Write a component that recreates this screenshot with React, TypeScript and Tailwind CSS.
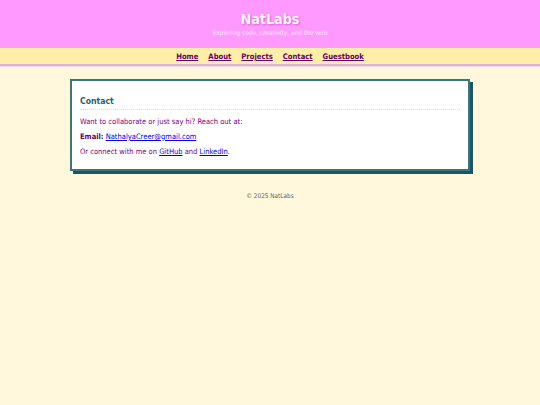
export default function App() {
  const links = ['Home', 'About', 'Projects', 'Contact', 'Guestbook'];
  return (
    <div className="min-h-[405px] bg-[#fff8dc] font-['DejaVu_Sans_Condensed','DejaVu_Sans',sans-serif] [font-stretch:condensed]">
      <header className="h-[48px] bg-[#ff99ff] pt-[11px] text-center shadow-[0_1px_1px_rgba(220,110,220,0.6)]">
        <h1 className="text-[14.2px] font-bold leading-[16px] text-[#fff0f8] [text-shadow:1px_1px_2px_rgba(170,60,170,0.55)]">NatLabs</h1>
        <p className="mt-[2px] text-[6.5px] leading-[8px] text-[#ffe4ff]">Exploring code, creativity, and the web</p>
      </header>
      <nav className="flex justify-center gap-[10px] border-b-2 border-[#d8b6d8] bg-[#ffeeaa] pt-[4px] pb-[3px] shadow-[0_1px_1px_rgba(230,200,230,0.6)]">
        {links.map((l) => (
          <a key={l} href="#" className="text-[7.6px] font-bold leading-[9px] text-[#660066] underline">
            {l}
          </a>
        ))}
      </nav>
      <main className="px-[70px] pt-[13px]">
        <section className="border-2 border-[#3a7878] bg-white px-[8px] pt-[15px] pb-[13px] shadow-[3px_3px_0_#1c5563]">
          <h2 className="border-b border-dotted border-[#dddddd] pb-[1.5px] text-[8.6px] font-bold leading-[11px] text-[#1f5f6f]">Contact</h2>
          <p className="mt-[7.5px] text-[7.5px] leading-[9px] text-[#800080]">Want to collaborate or just say hi? Reach out at:</p>
          <p className="mt-[6px] text-[7.5px] leading-[9px] text-[#800080]">
            <strong className="text-[#660066]">Email:</strong>{' '}
            <a href="#" className="text-[#0000ee] underline">NathalyaCreer@gmail.com</a>
          </p>
          <p className="mt-[5.5px] text-[7.5px] leading-[9px] text-[#800080]">
            Or connect with me on <a href="#" className="text-[#0000ee] underline">GitHub</a> and{' '}
            <a href="#" className="text-[#0000ee] underline">LinkedIn</a>.
          </p>
        </section>
      </main>
      <footer className="mt-[21px] text-center text-[6.4px] leading-[8px] text-[#666666]">© 2025 NatLabs</footer>
    </div>
  );
}
